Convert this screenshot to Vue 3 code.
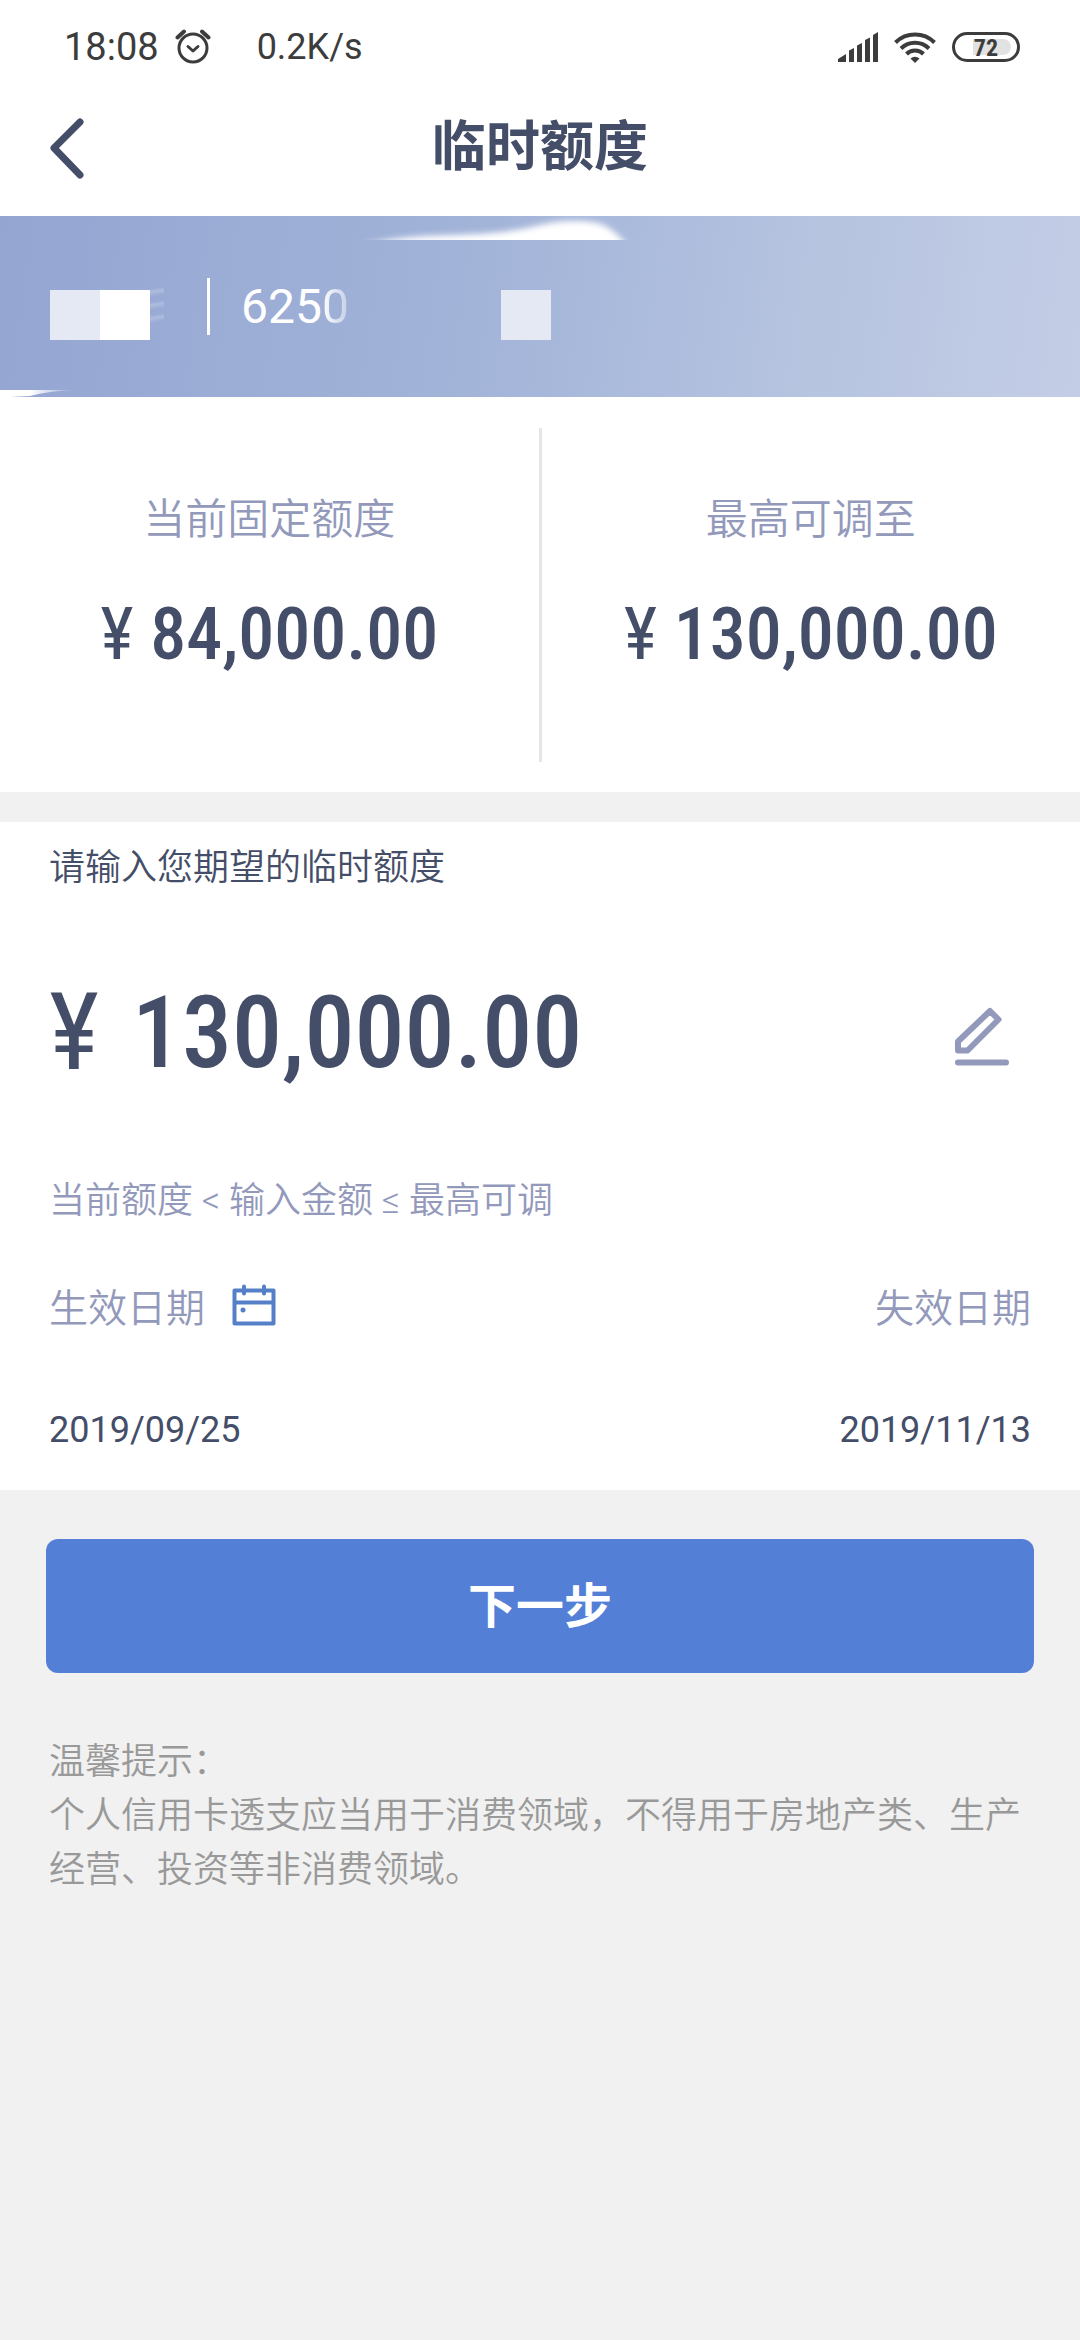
<script setup>
import { ref } from 'vue'

const cardPrefix = ['625', '0']
const limits = [
  { label: '当前固定额度', value: '84,000.00' },
  { label: '最高可调至', value: '130,000.00' },
]
const amount = ref('130,000.00')
const startDate = '2019/09/25'
const endDate = '2019/11/13'
</script>

<template>
  <div class="page">
    <div class="status">
      <div class="status-side">
        <span class="time">18:08</span>
        <svg class="alarm" width="36" height="36" viewBox="0 0 36 36" fill="none" stroke="#3c3c3c" stroke-width="3" stroke-linecap="round">
          <circle cx="18" cy="19" r="14" />
          <path d="M13 17.500l5 4.500 5-4.500" stroke-linejoin="round" />
          <path d="M2.500 8.500L9 2.500M33.500 8.500L27 2.500" stroke-width="4" />
        </svg>
        <span class="speed">0.2K/s</span>
      </div>
      <div class="status-side">
        <svg width="40" height="30" viewBox="0 0 40 30" fill="#3c3c3c">
          <path d="M0 30v-3l8-5v8zM11 30V18.500l5-2.500v14zM19 30V13.500l5-2.500v19zM27 30V8l5-2.500V30zM35 30V3l5-3v30z" />
        </svg>
        <svg class="wifi" width="42" height="31" viewBox="0 0 42 31" fill="none" stroke="#3c3c3c" stroke-width="4">
          <path d="M1.500 10.500a28 28 0 0 1 39 0M7 16.500a20 20 0 0 1 28 0M12.500 22a12 12 0 0 1 17 0" />
          <path d="M21 31l-4.500-4.500a7 7 0 0 1 9 0z" fill="#3c3c3c" stroke="none" />
        </svg>
        <span class="battery"><span class="level">72</span></span>
      </div>
    </div>

    <header class="header">
      <button class="back" type="button" aria-label="返回">
        <svg width="36" height="62" viewBox="0 0 36 62" fill="none" stroke="#444e68" stroke-width="7" stroke-linecap="round" stroke-linejoin="round">
          <path d="M32 5L6 31l26 27" />
        </svg>
      </button>
      <h1>临时额度</h1>
      <span></span>
    </header>

    <main>
      <section class="card-banner">
        <svg class="glow glow-top" width="290" height="24" viewBox="0 0 290 24" aria-hidden="true">
          <defs><filter id="soft" x="-10%" y="-60%" width="120%" height="220%"><feGaussianBlur stdDeviation="3" /></filter></defs>
          <path d="M10 30C60 16 110 21 150 16S192 5 224 5s38 10 54 27z" fill="#fff" filter="url(#soft)" />
        </svg>
        <svg class="glow glow-bottom" width="80" height="7" viewBox="0 0 80 7" aria-hidden="true">
          <defs><linearGradient id="fade"><stop offset="0.400" stop-color="#fff" /><stop offset="1" stop-color="#fff" stop-opacity="0" /></linearGradient></defs>
          <path d="M0 0h76Q48 1 30 6L10 7H0z" fill="url(#fade)" />
        </svg>
        <div class="tiles"><i class="pale"></i><i class="white"></i><i class="smudge"></i></div>
        <span class="bar"></span>
        <span class="digits">{{ cardPrefix[0] }}<span class="fading">{{ cardPrefix[1] }}</span></span>
        <div class="tiles last"><i class="pale"></i></div>
      </section>

      <section class="limits">
        <div v-for="item in limits" :key="item.label" class="limit">
          <p class="limit-label">{{ item.label }}</p>
          <p class="limit-value"><span class="yen">¥</span> {{ item.value }}</p>
        </div>
      </section>

      <section class="form">
        <label class="prompt" for="amount">请输入您期望的临时额度</label>
        <div class="entry">
          <span class="yen">¥</span>
          <input id="amount" v-model="amount" type="text" inputmode="decimal" />
          <button class="edit" type="button" aria-label="修改金额">
            <svg width="56" height="60" viewBox="0 0 56 60" fill="none" stroke="#9399bb" stroke-width="6" stroke-linejoin="round" stroke-linecap="round">
              <path d="M36 4l8.500 8.500L13.500 43.500H4V34.500z" />
              <path d="M4 55.500h48" />
            </svg>
          </button>
        </div>
        <p class="hint">当前额度 &lt; 输入金额 ≤ 最高可调</p>
        <div class="row labels">
          <span class="with-icon">生效日期
            <button class="calendar" type="button" aria-label="选择日期">
              <svg width="44" height="42" viewBox="0 0 44 42" fill="none" stroke="#5580c8" stroke-width="4" stroke-linecap="round" stroke-linejoin="round">
                <path d="M2.500 6.500h39v33h-39zM2.500 18.500h39M12 2.500v7M32 2.500v7" />
                <circle cx="11" cy="26" r="2.500" fill="#5580c8" stroke="none" />
              </svg>
            </button>
          </span>
          <span>失效日期</span>
        </div>
        <div class="row dates">
          <time>{{ startDate }}</time>
          <time>{{ endDate }}</time>
        </div>
      </section>

      <button class="next" type="button">下一步</button>

      <section class="tips">
        <p>温馨提示：</p>
        <p>个人信用卡透支应当用于消费领域，不得用于房地产类、生产经营、投资等非消费领域。</p>
      </section>
    </main>
  </div>
</template>

<style>
body {
  background: #f1f1f1;
}
</style>

<style scoped>
.page {
  min-height: 100vh;
  background: #f1f1f1;
  color: #444e68;
  font-family: Roboto, "Noto Sans CJK SC", sans-serif;
  font-size: 36px;
  font-weight: 350;
}
p, h1 {
  margin: 0;
}
button {
  display: flex;
  padding: 0;
  border: 0;
  background: none;
  font-family: inherit;
}
.status {
  display: flex;
  justify-content: space-between;
  align-items: center;
  height: 78px;
  padding: 16px 60px 0 64px;
  box-sizing: border-box;
  background: #fff;
  color: #3c3c3c;
  font-weight: 400;
}
.status-side {
  display: flex;
  align-items: center;
}
.time {
  font-size: 38px;
}
.alarm {
  margin: 0 46px 0 16px;
}
.wifi {
  margin: 0 16px;
}
.battery {
  display: flex;
  width: 68px;
  height: 30px;
  box-sizing: border-box;
  padding: 4px 6px;
  border: 3px solid #3c3c3c;
  border-radius: 15px;
}
.level {
  flex: 1;
  background: linear-gradient(90deg, transparent 24%, #e2e2e2 24%);
  border-radius: 0 8px 8px 0;
  font-family: "Roboto Condensed", Roboto, sans-serif;
  font-size: 24px;
  font-weight: 700;
  line-height: 18px;
  text-align: center;
}
.header {
  display: grid;
  grid-template-columns: 1fr auto 1fr;
  align-items: center;
  height: 138px;
  padding: 2px 48px 0;
  box-sizing: border-box;
  background: #fff;
}
h1 {
  font-size: 54px;
  font-weight: 700;
  line-height: 72px;
}
.card-banner {
  position: relative;
  display: flex;
  align-items: center;
  height: 181px;
  padding: 0 50px;
  box-sizing: border-box;
  background: linear-gradient(98deg, #94a5d2, #a3b4d9 45%, #b6c4e0 75%, #c4cde6);
  color: #fff;
}
.glow {
  position: absolute;
}
.glow-top {
  top: 0;
  left: 352px;
}
.glow-bottom {
  bottom: 0;
  left: 0;
}
.tiles {
  display: flex;
  width: 157px;
  margin-top: 16px;
}
.tiles i {
  width: 50px;
  height: 50px;
}
.tiles.last {
  margin-left: 152px;
}
.pale {
  background: #e5e9f3;
}
.white {
  background: #fff;
}
.tiles .smudge {
  width: 14px;
  height: 42px;
  margin-top: -6px;
  background: repeating-linear-gradient(170deg, transparent 0 5px, #c3cde680 8px, transparent 13px);
}
.bar {
  width: 3px;
  height: 57px;
  background: #fff;
}
.digits {
  margin-left: 31px;
  font-size: 48px;
  font-weight: 400;
}
.fading {
  background: linear-gradient(90deg, #fff, #ffffff60);
  background-clip: text;
  color: transparent;
}
.limits {
  display: flex;
  height: 395px;
  background: #fff;
}
.limit {
  flex: 1;
  padding-top: 62px;
  margin: 31px 0 30px;
  text-align: center;
}
.limit + .limit {
  border-left: 3px solid #e6e6e8;
}
.limit-label {
  color: #9399bb;
  font-size: 42px;
  line-height: 60px;
}
.limit-value {
  margin-top: 40px;
  font-family: "Roboto Condensed", Roboto, sans-serif;
  font-size: 72px;
  font-weight: 500;
  line-height: 90px;
  white-space: nowrap;
}
.yen {
  font-weight: 400;
}
.form {
  margin-top: 30px;
  padding: 19px 49px 33px;
  background: #fff;
}
.prompt {
  display: block;
  line-height: 54px;
}
.entry {
  display: flex;
  align-items: center;
  height: 120px;
  margin-top: 77px;
  padding-right: 21px;
  font-family: "Roboto Condensed", Roboto, sans-serif;
  font-size: 108px;
}
.entry input {
  flex: 1;
  min-width: 0;
  margin-left: 33px;
  padding: 0;
  border: 0;
  background: none;
  color: inherit;
  font-family: inherit;
  font-size: 100px;
  font-weight: 500;
  outline: none;
}
.edit {
  padding-top: 10px;
}
.hint {
  margin-top: 82px;
  color: #9399bb;
  line-height: 54px;
}
.row {
  display: flex;
  justify-content: space-between;
  align-items: center;
}
.labels {
  margin-top: 51px;
  color: #9399bb;
  font-size: 39px;
  line-height: 60px;
}
.with-icon {
  display: flex;
  align-items: center;
  gap: 27px;
}
.calendar {
  padding-bottom: 8px;
}
.dates {
  margin-top: 64px;
  font-weight: 400;
  line-height: 54px;
}
.next {
  justify-content: center;
  align-items: center;
  width: calc(100% - 92px);
  height: 134px;
  margin: 49px auto 62px;
  padding-bottom: 8px;
  border-radius: 12px;
  background: #537fd7;
  color: #fff;
  font-size: 48px;
  font-weight: 700;
}
.tips {
  padding: 0 49px;
  color: #999;
  line-height: 54px;
}
</style>
